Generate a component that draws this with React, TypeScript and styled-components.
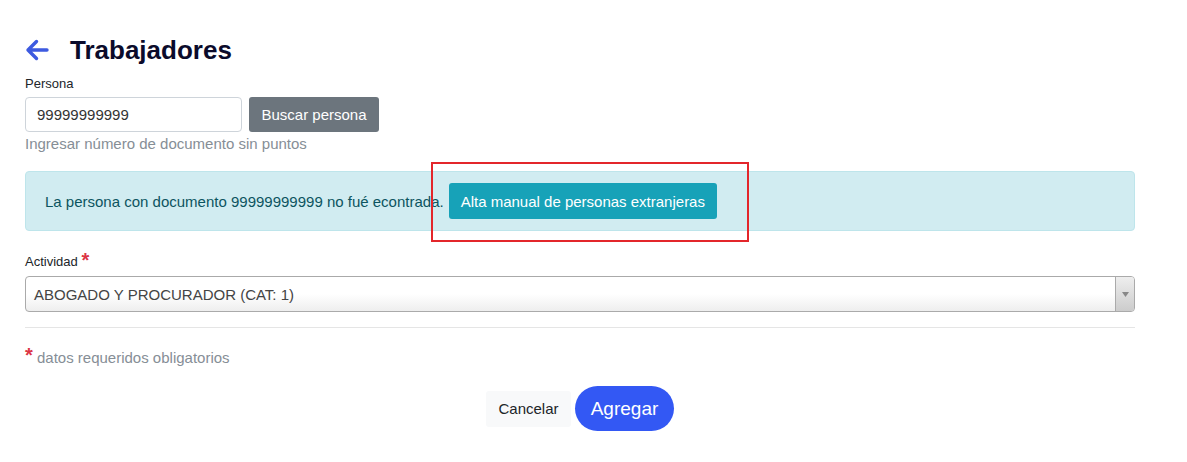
import { styled, createGlobalStyle } from 'styled-components';

const GlobalStyle = createGlobalStyle`
  body {
    margin: 0;
    background: #ffffff;
    font-family: 'Liberation Sans', Arial, sans-serif;
  }
`;

const BackArrow = () => (
  <svg width="24" height="22" viewBox="0 0 24 22" fill="none">
    <path
      d="M22 11H3M11.5 2.5L3 11l8.5 8.5"
      stroke="#3d5ae0"
      strokeWidth="3.4"
      strokeLinecap="round"
      strokeLinejoin="round"
    />
  </svg>
);

const App = () => {
  return (
    <>
      <GlobalStyle />
      <St.Page>
        <St.Header>
          <St.BackBtn>
            <BackArrow />
          </St.BackBtn>
          <St.Title>Trabajadores</St.Title>
        </St.Header>

        <St.Label $mt={12}>Persona</St.Label>
        <St.SearchRow>
          <St.Input defaultValue="99999999999" />
          <St.SearchBtn>Buscar persona</St.SearchBtn>
        </St.SearchRow>
        <St.Help>Ingresar número de documento sin puntos</St.Help>

        <St.Alert>
          <span>La persona con documento 99999999999 no fué econtrada.</span>
          <St.AlertBtn>Alta manual de personas extranjeras</St.AlertBtn>
          <St.Highlight />
        </St.Alert>

        <St.Label $mt={23}>
          Actividad <St.Req>*</St.Req>
        </St.Label>
        <St.Select>
          <St.SelectText>ABOGADO Y PROCURADOR (CAT: 1)</St.SelectText>
          <St.SelectArrow>
            <svg width="7" height="5" viewBox="0 0 7 5">
              <path d="M0 0h7L3.5 5z" fill="#888" />
            </svg>
          </St.SelectArrow>
        </St.Select>

        <St.Divider />

        <St.Required>
          <St.Req>*</St.Req> datos requeridos obligatorios
        </St.Required>

        <St.Actions>
          <St.CancelBtn>Cancelar</St.CancelBtn>
          <St.AddBtn>Agregar</St.AddBtn>
        </St.Actions>
      </St.Page>
    </>
  );
};

export default App;

const St = {
  Page: styled.div`
    display: flex;
    flex-direction: column;
    width: 1110px;
    padding: 36px 0 0 25px;
  `,

  Header: styled.div`
    display: flex;
    align-items: center;
    height: 28px;
  `,

  BackBtn: styled.div`
    display: flex;
    align-items: center;
    width: 45px;
    margin-top: -1px;
  `,

  Title: styled.h1`
    margin: 0;
    font-size: 26px;
    line-height: 28px;
    font-weight: 700;
    color: #0b0b2b;
    font-family: 'Liberation Sans', Arial, sans-serif;
  `,

  Label: styled.div<{ $mt: number }>`
    margin-top: ${({ $mt }) => $mt}px;
    font-size: 13px;
    line-height: 16px;
    color: #212529;
  `,

  Req: styled.span`
    color: #dc3545;
    font-size: 20px;
    font-weight: 700;
    vertical-align: top;
    line-height: 12px;
  `,

  SearchRow: styled.div`
    display: flex;
    gap: 7px;
    margin-top: 5px;
  `,

  Input: styled.input`
    box-sizing: border-box;
    width: 217px;
    height: 35px;
    padding: 0 11px;
    border: 1px solid #ced4da;
    border-radius: 4px;
    font-size: 15px;
    color: #333;
    font-family: 'Liberation Sans', Arial, sans-serif;
    outline: none;
  `,

  SearchBtn: styled.button`
    width: 130px;
    height: 35px;
    border: none;
    border-radius: 3px;
    background: #6c757d;
    color: #ffffff;
    font-size: 15px;
    font-family: 'Liberation Sans', Arial, sans-serif;
  `,

  Help: styled.div`
    margin-top: 3px;
    font-size: 15px;
    line-height: 18px;
    color: #868e96;
  `,

  Alert: styled.div`
    position: relative;
    box-sizing: border-box;
    display: flex;
    align-items: center;
    gap: 5px;
    height: 60px;
    margin-top: 18px;
    padding: 0 19px;
    background: #d1ecf1;
    border: 1px solid #bee5eb;
    border-radius: 4px;
    color: #0c5460;
    font-size: 15px;
  `,

  AlertBtn: styled.button`
    height: 36px;
    padding: 0 12px;
    border: none;
    border-radius: 3px;
    background: #17a2b8;
    color: #ffffff;
    font-size: 15px;
    font-family: 'Liberation Sans', Arial, sans-serif;
  `,

  Highlight: styled.div`
    position: absolute;
    left: 405px;
    top: -10px;
    width: 314px;
    height: 76px;
    border: 2px solid #e3262b;
    pointer-events: none;
  `,

  Select: styled.div`
    box-sizing: border-box;
    display: flex;
    align-items: stretch;
    height: 36px;
    margin-top: 6px;
    border: 1px solid #aaaaaa;
    border-radius: 4px;
    background: linear-gradient(to bottom, #ffffff 50%, #eeeeee 100%);
  `,

  SelectText: styled.div`
    flex: 1;
    display: flex;
    align-items: center;
    padding-left: 8px;
    font-size: 15px;
    color: #444;
  `,

  SelectArrow: styled.div`
    display: flex;
    align-items: center;
    justify-content: center;
    width: 18px;
    border-left: 1px solid #aaaaaa;
    background: linear-gradient(to bottom, #eeeeee 0%, #cccccc 100%);
    border-radius: 0 3px 3px 0;
  `,

  Divider: styled.hr`
    width: 100%;
    margin: 15px 0 0;
    border: none;
    border-top: 1px solid #e5e5e5;
  `,

  Required: styled.div`
    margin-top: 21px;
    font-size: 15px;
    line-height: 18px;
    color: #868e96;
  `,

  Actions: styled.div`
    display: flex;
    align-items: center;
    justify-content: center;
    gap: 4px;
    margin-top: 19px;
  `,

  CancelBtn: styled.button`
    width: 85px;
    height: 36px;
    border: none;
    border-radius: 3px;
    background: #f8f9fa;
    color: #212529;
    font-size: 15px;
    font-family: 'Liberation Sans', Arial, sans-serif;
  `,

  AddBtn: styled.button`
    width: 99px;
    height: 45px;
    border: none;
    border-radius: 23px;
    background: #3358f4;
    color: #ffffff;
    font-size: 19px;
    font-family: 'Liberation Sans', Arial, sans-serif;
  `,
};
